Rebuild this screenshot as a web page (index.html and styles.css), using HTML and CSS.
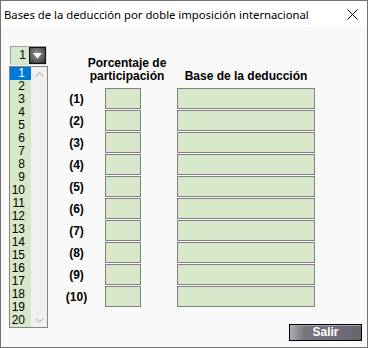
FILE: index.html
```html
<!DOCTYPE html>
<html>
<head>
<meta charset="utf-8">
<title>Bases de la deducción</title>
<link rel="stylesheet" href="styles.css">
</head>
<body>
<div class="window">
  <div class="titlebar">
    <span class="title">Bases de la deducción por doble imposición internacional</span>
    <svg class="close" width="11" height="11" viewBox="0 0 11 11"><path d="M0.5 0.5 L10.5 10.5 M10.5 0.5 L0.5 10.5" stroke="#000" stroke-width="1" fill="none"/></svg>
  </div>
  <div class="client">
    <div class="picker">
      <div class="combo">
        <span class="combo-value">1</span>
        <span class="combo-btn"><svg width="9" height="6" viewBox="0 0 9 6"><path d="M0 0 H9 L4.5 5.5 Z" fill="#fff"/></svg></span>
      </div>
      <div class="listbox">
        <ul class="items">
          <li class="sel">1</li><li>2</li><li>3</li><li>4</li><li>5</li>
          <li>6</li><li>7</li><li>8</li><li>9</li><li>10</li>
          <li>11</li><li>12</li><li>13</li><li>14</li><li>15</li>
          <li>16</li><li>17</li><li>18</li><li>19</li><li>20</li>
        </ul>
        <div class="scroll">
          <svg width="9" height="5" viewBox="0 0 9 5"><path d="M0.5 4.5 L4.5 0.8 L8.5 4.5" stroke="#c2c2c2" stroke-width="1.4" fill="none"/></svg>
          <svg width="9" height="5" viewBox="0 0 9 5"><path d="M0.5 0.5 L4.5 4.2 L8.5 0.5" stroke="#c2c2c2" stroke-width="1.4" fill="none"/></svg>
        </div>
      </div>
    </div>
    <div class="main">
      <div class="grid">
        <div class="head"></div>
        <div class="head head-pct"><span>Porcentaje de<br>participación</span></div>
        <div class="head"><span>Base de la deducción</span></div>

        <div class="lbl">(1)</div><div class="box pct"></div><div class="box base"></div>
        <div class="lbl">(2)</div><div class="box pct"></div><div class="box base"></div>
        <div class="lbl">(3)</div><div class="box pct"></div><div class="box base"></div>
        <div class="lbl">(4)</div><div class="box pct"></div><div class="box base"></div>
        <div class="lbl">(5)</div><div class="box pct"></div><div class="box base"></div>
        <div class="lbl">(6)</div><div class="box pct"></div><div class="box base"></div>
        <div class="lbl">(7)</div><div class="box pct"></div><div class="box base"></div>
        <div class="lbl">(8)</div><div class="box pct"></div><div class="box base"></div>
        <div class="lbl">(9)</div><div class="box pct"></div><div class="box base"></div>
        <div class="lbl">(10)</div><div class="box pct"></div><div class="box base"></div>
      </div>
      <div class="actions"><button class="btn">Salir</button></div>
    </div>
  </div>
</div>
</body>
</html>
```

FILE: styles.css
```css
html, body {
  margin: 0;
  padding: 0;
}
body {
  width: 368px;
  height: 348px;
  font-family: "Liberation Sans", Arial, sans-serif;
  font-size: 12px;
  color: #000;
}
.window {
  box-sizing: border-box;
  width: 368px;
  height: 348px;
  border: 1px solid #727272;
  background: #f9f9f9;
  display: flex;
  flex-direction: column;
}
.titlebar {
  height: 26px;
  flex: none;
  background: #fff;
  display: flex;
  align-items: center;
  justify-content: space-between;
  padding: 0 9px 0 3px;
}
.title {
  font-family: "Noto Sans", "Open Sans", sans-serif;
  font-size: 11.3px;
  color: #000;
  white-space: nowrap;
}
.close {
  display: block;
}
.client {
  flex: 1;
  display: flex;
  padding: 19px 5px 6px 8px;
  min-height: 0;
}
.picker {
  width: 39px;
  flex: none;
  display: flex;
  flex-direction: column;
}
.combo {
  box-sizing: border-box;
  margin-left: 1px;
  width: 37px;
  height: 19px;
  margin-bottom: 1px;
  display: flex;
  border: 1px solid;
  border-color: #a0a0a0 #dcdcdc #dcdcdc #a0a0a0;
}
.combo-value {
  flex: 1;
  background: #d6e8c9;
  text-align: right;
  padding-right: 3px;
  line-height: 17px;
}
.combo-btn {
  box-sizing: border-box;
  width: 17px;
  border: 1px solid #111;
  background: radial-gradient(circle at 45% 40%, #9a9a9a 0, #6a6a6a 45%, #2e2e2e 100%);
  display: flex;
  align-items: center;
  justify-content: center;
}
.combo-btn svg {
  display: block;
}
.listbox {
  box-sizing: border-box;
  height: 262px;
  border: 1px solid #848484;
  display: flex;
  background: #f0f0f0;
}
.items {
  list-style: none;
  margin: 0;
  padding: 0;
  width: 21px;
  background: #d6e8c9;
}
.items li {
  height: 13px;
  line-height: 13px;
  text-align: right;
  padding-right: 6px;
}
.items li.sel {
  background: #0078d7;
  color: #fff;
}
.scroll {
  flex: 1;
  display: flex;
  flex-direction: column;
  justify-content: space-between;
  align-items: center;
  padding: 5px 0 4px;
}
.scroll svg {
  display: block;
}
.main {
  flex: 1;
  margin-left: 12px;
  display: flex;
  flex-direction: column;
  justify-content: space-between;
}
.grid {
  display: grid;
  grid-template-columns: 33px 60px 138px;
  grid-template-rows: 41px repeat(10, 21px);
  column-gap: 12px;
  row-gap: 1px;
}
.head {
  display: flex;
  align-items: flex-end;
  justify-content: center;
  padding-bottom: 4px;
  font-weight: bold;
  line-height: 13px;
  text-align: center;
  white-space: nowrap;
}
.head-pct {
  box-sizing: border-box;
  width: 40px;
  padding-left: 4px;
  justify-self: start;
}
.lbl {
  display: flex;
  align-items: center;
  justify-content: center;
  font-weight: bold;
}
.box {
  box-sizing: border-box;
  border: 1px solid #808080;
  background: #d6e8c9;
}
.box.pct {
  width: 36px;
}
.actions {
  display: flex;
  justify-content: flex-end;
}
.btn {
  box-sizing: border-box;
  width: 73px;
  height: 17px;
  padding: 0;
  border: 1px solid #000;
  background: linear-gradient(to right, #b0aeb6 0, #78757f 14px, #68656f 100%);
  box-shadow: inset 1px 1px 0 #a9a7af;
  color: #fff;
  font-family: "Liberation Sans", Arial, sans-serif;
  font-weight: bold;
  font-size: 12px;
  line-height: 15px;
}
```
